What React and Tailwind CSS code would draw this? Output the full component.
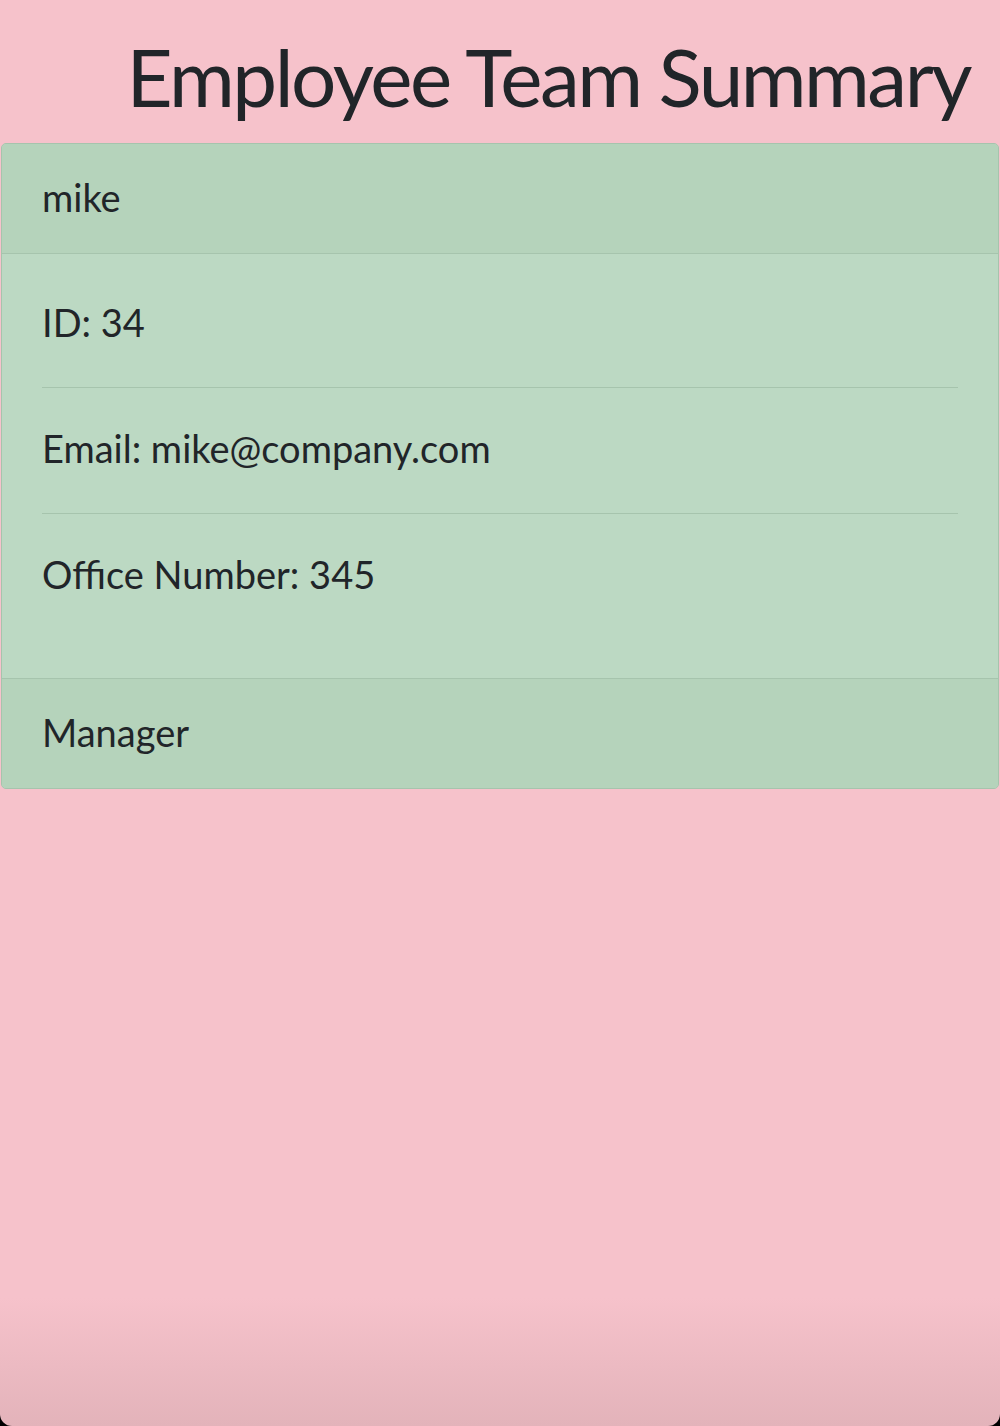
export default function App() {
  const font = { fontFamily: "Lato, 'Noto Sans', sans-serif" };
  return (
    <div className="bg-black min-h-[1426px]" style={font}>
      <div className="min-h-[1426px] rounded-b-[12px] bg-[linear-gradient(to_bottom,#f6c2cb_0%,#f6c2cb_91%,#e3b3ba_100%)] text-[#212529]">
        <h1 className="h-[143px] flex items-center justify-end pr-[30px] text-[80px] leading-none font-normal tracking-[-2.5px] pt-[8px]">
          Employee Team Summary
        </h1>
        <div className="mx-px border border-[#a6c4ad] rounded-[5px] bg-[#bcd9c3] overflow-hidden">
          <div className="bg-[#b5d3bb] border-b border-[#a6c4ad] px-[40px] pt-[26px] pb-[29px] text-[38px] leading-[54px]">
            mike
          </div>
          <div className="px-[40px] pt-[8px] pb-[39px] text-[38px] leading-[54px]">
            <div className="pt-[33px] pb-[38px] border-b border-[#a6c4ad]">ID: 34</div>
            <div className="pt-[33px] pb-[38px] border-b border-[#a6c4ad]">Email: mike@company.com</div>
            <div className="pt-[33px] pb-[38px]">Office Number: 345</div>
          </div>
          <div className="bg-[#b5d3bb] border-t border-[#a6c4ad] px-[40px] pt-[26px] pb-[29px] text-[38px] leading-[54px]">
            Manager
          </div>
        </div>
      </div>
    </div>
  );
}
